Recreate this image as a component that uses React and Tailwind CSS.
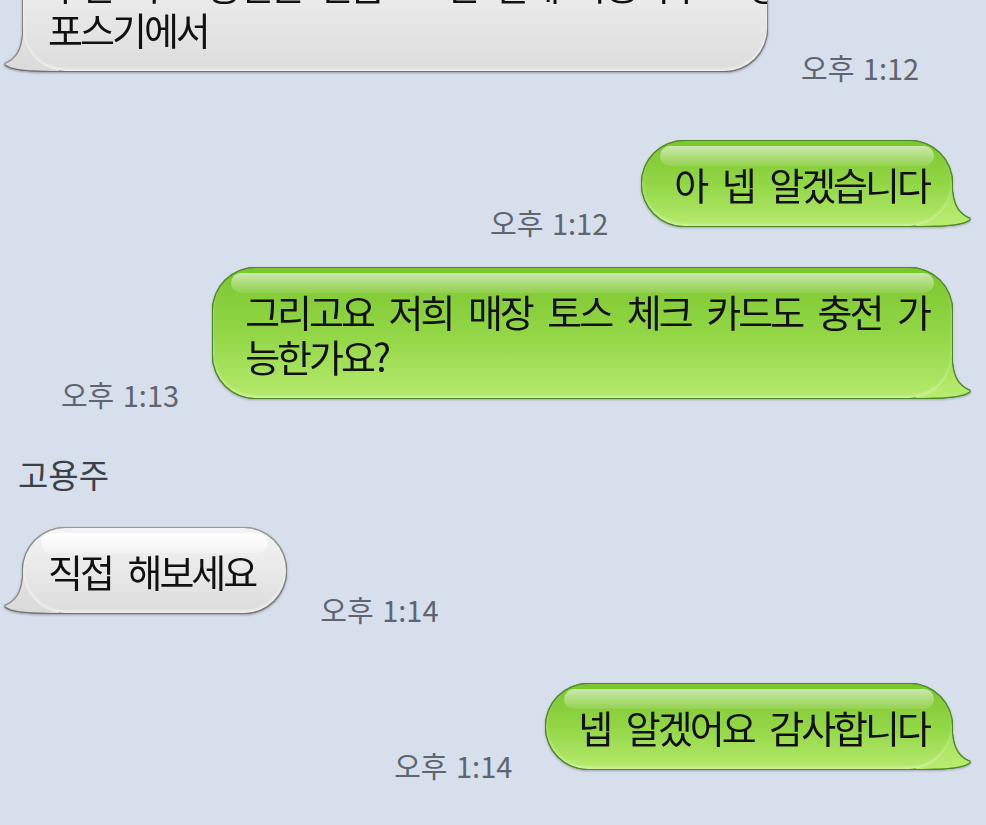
import React from 'react'

const GREEN_EDGE =
  '[filter:drop-shadow(1px_0_0_#4b8a26)_drop-shadow(-1px_0_0_#4b8a26)_drop-shadow(0_1px_0_#4b8a26)_drop-shadow(0_-1px_0_#4b8a26)_drop-shadow(0_1px_1px_rgba(0,0,0,0.25))]'
const GRAY_EDGE =
  '[filter:drop-shadow(1px_0_0_#858585)_drop-shadow(-1px_0_0_#858585)_drop-shadow(0_1px_0_#707070)_drop-shadow(0_-1px_0_#9a9a9a)_drop-shadow(0_1px_1px_rgba(0,0,0,0.3))]'

function Tail({ sent }) {
  const id = sent ? 'tail-green' : 'tail-gray'
  return (
    <svg
      width="64"
      height="46"
      viewBox="0 0 64 46"
      className={sent ? 'absolute bottom-0 right-[-20px]' : 'absolute bottom-0 left-[-20px] -scale-x-100'}
    >
      <defs>
        <linearGradient id={id} x1="0" y1="0" x2="0" y2="1">
          <stop offset="0" stopColor={sent ? '#a3de55' : '#e3e3e3'} />
          <stop offset="1" stopColor={sent ? '#b9ec70' : '#dadada'} />
        </linearGradient>
      </defs>
      <path
        d="M43.5 2 C44 21 47.5 33 62 39 C55 44 46 45.5 8 46 L8 20 L28 2 Z"
        fill={`url(#${id})`}
      />
    </svg>
  )
}

function Bubble({ sent, width, children }) {
  return (
    <div className={`relative ${sent ? GREEN_EDGE : GRAY_EDGE}`} style={width ? { width } : undefined}>
      <Tail sent={sent} />
      <div
        className={
          sent
            ? 'relative overflow-hidden rounded-[43px] bg-linear-to-b from-[#7cc62f] via-[#92d645] to-[#b6ea6c] pl-[32px] pr-[23px] py-[20px] shadow-[inset_0_-2px_3px_rgba(255,255,255,0.4)]'
            : 'relative overflow-hidden rounded-[43px] bg-linear-to-b from-[#f3f3f3] via-[#e9e9e9] to-[#dcdcdc] pl-[25px] pr-[31px] py-[20px] shadow-[inset_0_-2px_3px_rgba(255,255,255,0.6)]'
        }
      >
        <div
          className={
            sent
              ? 'absolute left-[18px] right-[18px] top-[5px] h-[20px] rounded-full bg-linear-to-b from-white/60 to-white/10'
              : 'absolute left-[18px] right-[18px] top-[5px] h-[20px] rounded-full bg-linear-to-b from-white to-white/30'
          }
        />
        <p className="relative whitespace-nowrap text-[38px] leading-[45px] tracking-[-3px] [word-spacing:10px] text-[#111]">
          {children}
        </p>
      </div>
    </div>
  )
}

function Time({ children, sent }) {
  return (
    <span
      className={
        sent
          ? 'mr-[34px] -mb-[13px] whitespace-nowrap text-[29px] leading-[34px] text-[#5f6570] [word-spacing:2px]'
          : 'ml-[34px] -mb-[13px] whitespace-nowrap text-[29px] leading-[34px] text-[#5f6570] [word-spacing:2px]'
      }
    >
      {children}
    </span>
  )
}

function Sent({ time, className, children }) {
  return (
    <div className={`flex items-end justify-end pr-[34px] ${className}`}>
      <Time sent>{time}</Time>
      <Bubble sent>{children}</Bubble>
    </div>
  )
}

function Received({ time, className, width, children }) {
  return (
    <div className={`flex items-end pl-[23px] ${className}`}>
      <Bubble width={width}>{children}</Bubble>
      <Time>{time}</Time>
    </div>
  )
}

export default function App() {
  return (
    <div className="w-[986px] h-[825px] overflow-hidden bg-[#d6dfeb] font-['Noto_Sans_CJK_KR','Noto_Sans',sans-serif]">
      <Received time="오후 1:12" className="mt-[-59px]" width={744}>
        우선 카드 충전은 현금으로만 결제 가능하구요 충
        <br />
        포스기에서
      </Received>

      <Sent time="오후 1:12" className="mt-[70px]">
        아 넵 알겠습니다
      </Sent>

      <Sent time="오후 1:13" className="mt-[42px]">
        그리고요 저희 매장 토스 체크 카드도 충전 가
        <br />
        능한가요?
      </Sent>

      <div className="mt-[57px] pl-[18px] text-[33px] leading-[38px] text-[#3b414b]">고용주</div>

      <Received time="오후 1:14" className="mt-[35px]">
        직접 해보세요
      </Received>

      <Sent time="오후 1:14" className="mt-[71px]">
        넵 알겠어요 감사합니다
      </Sent>
    </div>
  )
}
